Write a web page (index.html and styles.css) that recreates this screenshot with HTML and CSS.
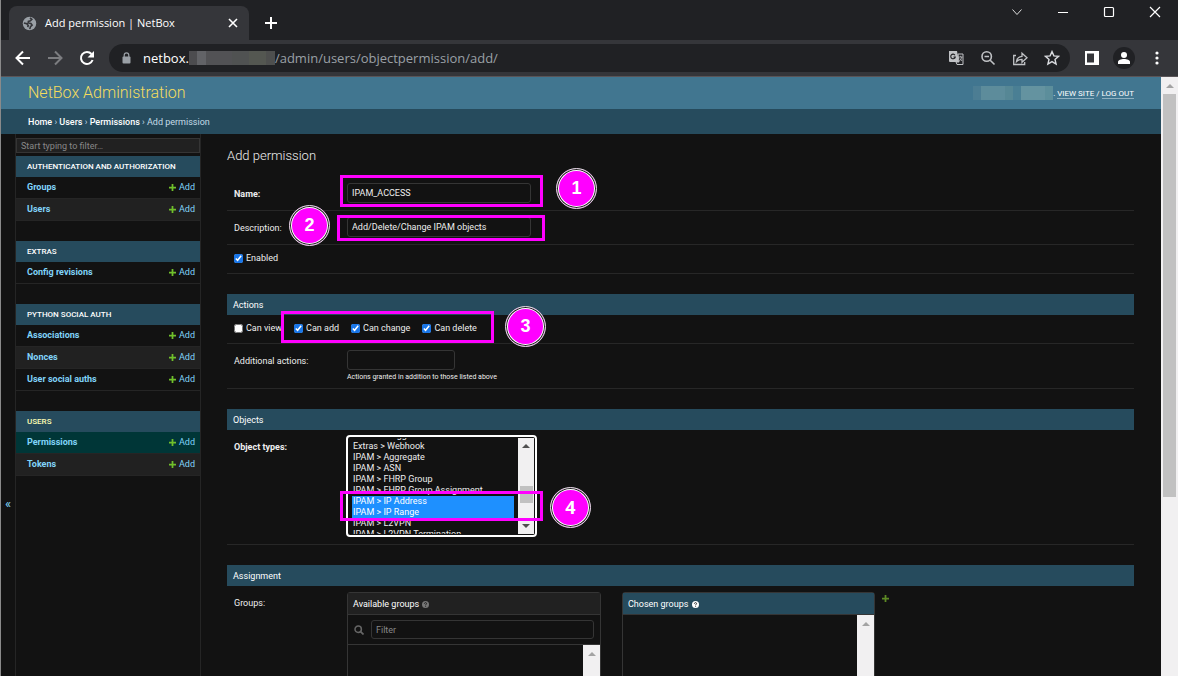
FILE: index.html
```html
<!DOCTYPE html>
<html lang="en">
<head>
<meta charset="utf-8">
<title>Add permission | NetBox</title>
<link rel="stylesheet" href="styles.css">
</head>
<body>
<svg class="defs" aria-hidden="true">
  <symbol id="plus" viewBox="0 0 8 8"><path d="M3 0h2v3h3v2H5v3H3V5H0V3h3z" fill="currentColor"/></symbol>
  <symbol id="help" viewBox="0 0 8 8"><circle cx="4" cy="4" r="4" fill="currentColor"/><path d="M2.7 3.1C2.8 1.4 5.3 1.5 5.2 3 5.1 3.8 4.1 3.7 4.1 4.8M4.1 5.5v1" fill="none" stroke="#151515" stroke-width="1"/></symbol>
</svg>

<div class="titlebar">
  <div class="tab">
    <svg class="globe" viewBox="0 0 16 16"><circle cx="8" cy="8" r="7.2" fill="#9aa0a6"/><path d="M8.500 2 10.500 3.600 9 5.200 6.800 5.800 6.600 7.400 9.500 8l1.300 1.800L9 11.500 8.300 14M2 7.500l3.200.8 1.500 2-.7 1.500" fill="none" stroke="#35363a" stroke-width="1.700"/></svg>
    <span class="tab-title">Add permission | NetBox</span>
    <button class="icon-btn tab-close" aria-label="Close tab"><svg viewBox="0 0 10 10"><path d="M1 1l8 8M9 1L1 9" stroke="#fff" stroke-width="1.6"/></svg></button>
  </div>
  <button class="icon-btn new-tab" aria-label="New tab"><svg viewBox="0 0 12 12"><path d="M6 0v12M0 6h12" stroke="#fff" stroke-width="2"/></svg></button>
  <div class="window-controls">
    <button class="icon-btn" aria-label="Search tabs"><svg viewBox="0 0 12 12"><path d="M1.500 3.500 6 8.500l4.500-5" fill="none" stroke="#ddd"/></svg></button>
    <button class="icon-btn" aria-label="Minimize"><svg viewBox="0 0 12 12"><path d="M1 6.500h10" stroke="#fff"/></svg></button>
    <button class="icon-btn" aria-label="Maximize"><svg viewBox="0 0 12 12"><rect x="1.500" y="1.500" width="9" height="9" rx="1" fill="none" stroke="#fff" stroke-width="1.200"/></svg></button>
    <button class="icon-btn" aria-label="Close"><svg viewBox="0 0 12 12"><path d="M1 1l10 10M11 1L1 11" stroke="#fff" stroke-width="1.200"/></svg></button>
  </div>
</div>

<div class="toolbar">
  <div class="nav">
    <button class="icon-btn" aria-label="Back"><svg viewBox="0 0 16 16"><path d="M15 8H2M8 1.500 1.500 8 8 14.500" fill="none" stroke="#fff" stroke-width="2"/></svg></button>
    <button class="icon-btn" aria-label="Forward"><svg viewBox="0 0 16 16"><path d="M1 8h13M8 1.500 14.500 8 8 14.500" fill="none" stroke="#7c7d80" stroke-width="2"/></svg></button>
    <button class="icon-btn" aria-label="Reload"><svg viewBox="0 0 16 16"><path d="M13.600 10A6 6 0 1 1 12.500 4" fill="none" stroke="#fff" stroke-width="2"/><path d="M15 1v6.500H8.500z" fill="#fff"/></svg></button>
  </div>
  <div class="omnibox">
    <svg class="lock" viewBox="0 0 9 12"><path d="M2.200 5V3.200a2.300 2.300 0 0 1 4.600 0V5" fill="none" stroke="#9aa0a6" stroke-width="1.200"/><rect x=".5" y="4.500" width="8" height="7" rx="1" fill="#9aa0a6"/></svg>
    <span class="url"><span class="host">netbox.</span><span class="mosaic mosaic-url"></span><span>/admin/users/objectpermission/add/</span></span>
    <div class="omni-actions">
      <button class="icon-btn" aria-label="Translate"><svg viewBox="0 0 16 16"><path d="M1 1h8l2 11H2a1 1 0 0 1-1-1z" fill="#c0c2c5"/><path d="M10 4h5v10.500H9L8 12h3z" fill="none" stroke="#c0c2c5"/><path d="M7 5.200A2.300 2.300 0 1 0 7.300 7H5.500" fill="none" stroke="#202124" stroke-width="1.100"/><path d="M11 7h3.500M12.700 5.800V7M13.800 7c-.4 2-1.500 3-2.500 4M12 8.500l2 2.500" fill="none" stroke="#c0c2c5" stroke-width=".8"/></svg></button>
      <button class="icon-btn" aria-label="Zoom"><svg viewBox="0 0 16 16"><circle cx="6.700" cy="6.500" r="4.700" fill="none" stroke="#c0c2c5" stroke-width="1.600"/><path d="M10.200 10.200 14.500 14.500M4.500 6.500h4.500" stroke="#c0c2c5" stroke-width="1.600"/></svg></button>
      <button class="icon-btn" aria-label="Share"><svg viewBox="0 0 16 16"><path d="M4 5.500H1.700v9h11V12M4.500 11.500C5 8 7 6.500 10 6.300V3.200l5 4.600-5 4.400V9.300c-2.500 0-4 .6-5.500 2.200z" fill="none" stroke="#c0c2c5" stroke-width="1.300"/></svg></button>
      <button class="icon-btn" aria-label="Bookmark"><svg viewBox="0 0 16 16"><path d="M8 1.600l1.900 4.300 4.600.4-3.500 3.100 1.100 4.600L8 11.600 3.900 14 5 9.400 1.500 6.300l4.600-.4z" fill="none" stroke="#dadce0" stroke-width="1.400"/></svg></button>
    </div>
  </div>
  <button class="icon-btn side-panel" aria-label="Side panel"><svg viewBox="0 0 14 14"><path d="M0 0h14v14H0zM2 2.500v9h7v-9z" fill="#fff" fill-rule="evenodd"/></svg></button>
  <button class="icon-btn profile" aria-label="Profile"><svg viewBox="0 0 12 12"><circle cx="6" cy="3" r="3" fill="#fff"/><path d="M0 12V10c0-2 3-3 6-3s6 1 6 3v2z" fill="#fff"/></svg></button>
  <button class="icon-btn more" aria-label="Menu"><svg viewBox="0 0 4 14"><circle cx="2" cy="2" r="1.600" fill="#fff"/><circle cx="2" cy="7" r="1.600" fill="#fff"/><circle cx="2" cy="12" r="1.600" fill="#fff"/></svg></button>
</div>

<div class="viewport">
  <div class="page">
    <header class="site-header">
      <a class="brand" href="#">NetBox Administration</a>
      <div class="user-tools"><span class="mosaic mosaic-user"></span><span>. <a href="#">View site</a> / <a href="#">Log out</a></span></div>
    </header>
    <nav class="breadcrumbs" aria-label="Breadcrumbs"><a href="#">Home</a> › <a href="#">Users</a> › <a href="#">Permissions</a> › Add permission</nav>

    <div class="body">
      <button class="toggle-nav" aria-label="Toggle navigation">«</button>
      <nav class="sidebar" aria-label="Sidebar">
        <input class="nav-filter" type="search" placeholder="Start typing to filter…" aria-label="Filter navigation items">
        <table class="module">
          <caption>Authentication and Authorization</caption>
          <tr><th scope="row"><a href="#">Groups</a></th><td><a href="#"><svg class="plus"><use href="#plus"/></svg>Add</a></td></tr>
          <tr><th scope="row"><a href="#">Users</a></th><td><a href="#"><svg class="plus"><use href="#plus"/></svg>Add</a></td></tr>
        </table>
        <table class="module">
          <caption>Extras</caption>
          <tr><th scope="row"><a href="#">Config revisions</a></th><td><a href="#"><svg class="plus"><use href="#plus"/></svg>Add</a></td></tr>
        </table>
        <table class="module">
          <caption>Python Social Auth</caption>
          <tr><th scope="row"><a href="#">Associations</a></th><td><a href="#"><svg class="plus"><use href="#plus"/></svg>Add</a></td></tr>
          <tr><th scope="row"><a href="#">Nonces</a></th><td><a href="#"><svg class="plus"><use href="#plus"/></svg>Add</a></td></tr>
          <tr><th scope="row"><a href="#">User social auths</a></th><td><a href="#"><svg class="plus"><use href="#plus"/></svg>Add</a></td></tr>
        </table>
        <table class="module current">
          <caption>Users</caption>
          <tr class="selected"><th scope="row"><a href="#">Permissions</a></th><td><a href="#"><svg class="plus"><use href="#plus"/></svg>Add</a></td></tr>
          <tr><th scope="row"><a href="#">Tokens</a></th><td><a href="#"><svg class="plus"><use href="#plus"/></svg>Add</a></td></tr>
        </table>
      </nav>

      <main class="content">
        <h1>Add permission</h1>
        <form>
          <section class="fieldset">
            <div class="row"><label class="label required" for="name">Name:</label><input class="text" id="name" type="text" value="IPAM_ACCESS"></div>
            <div class="row"><label class="label" for="description">Description:</label><input class="text" id="description" type="text" value="Add/Delete/Change IPAM objects"></div>
            <div class="row checks"><label><input type="checkbox" checked>Enabled</label></div>
          </section>
          <section class="fieldset">
            <h2>Actions</h2>
            <div class="row checks">
              <label><input type="checkbox">Can view</label>
              <label><input type="checkbox" checked>Can add</label>
              <label><input type="checkbox" checked>Can change</label>
              <label><input type="checkbox" checked>Can delete</label>
            </div>
            <div class="row with-help">
              <label class="label" for="actions">Additional actions:</label>
              <div><input class="text short" id="actions" type="text"><p class="help">Actions granted in addition to those listed above</p></div>
            </div>
          </section>
          <section class="fieldset">
            <h2>Objects</h2>
            <div class="row objects">
              <label class="label required" for="types">Object types:</label>
              <div class="listbox">
                <select id="types" multiple>
                  <option>Extras &gt; Tagged item</option>
                  <option>Extras &gt; Webhook</option>
                  <option>IPAM &gt; Aggregate</option>
                  <option>IPAM &gt; ASN</option>
                  <option>IPAM &gt; FHRP Group</option>
                  <option>IPAM &gt; FHRP Group Assignment</option>
                  <option selected>IPAM &gt; IP Address</option>
                  <option selected>IPAM &gt; IP Range</option>
                  <option>IPAM &gt; L2VPN</option>
                  <option>IPAM &gt; L2VPN Termination</option>
                </select>
                <div class="scroll dark"><span class="arrow up"></span><span class="thumb"></span><span class="arrow down"></span></div>
              </div>
            </div>
          </section>
          <section class="fieldset">
            <h2>Assignment</h2>
            <div class="row groups">
              <span class="label">Groups:</span>
              <div class="selector">
                <div class="picker">
                  <h3>Available groups <svg class="help-icon"><use href="#help"/></svg></h3>
                  <div class="picker-filter">
                    <svg class="search" viewBox="0 0 10 10"><circle cx="4.200" cy="4.200" r="3.200" fill="none" stroke="#666" stroke-width="1.500"/><path d="M6.600 6.600 9.500 9.500" stroke="#666" stroke-width="1.700"/></svg>
                    <input type="text" placeholder="Filter" aria-label="Filter groups">
                  </div>
                  <div class="picker-list"><div class="scroll"><span class="arrow up"></span></div></div>
                </div>
                <div class="picker chosen">
                  <h3>Chosen groups <svg class="help-icon"><use href="#help"/></svg></h3>
                  <div class="picker-list"><div class="scroll"><span class="arrow up"></span></div></div>
                </div>
                <a href="#" aria-label="Add group"><svg class="plus dim"><use href="#plus"/></svg></a>
              </div>
            </div>
          </section>
        </form>
      </main>

      <div class="callout box-name"></div>
      <div class="callout box-description"></div>
      <div class="callout box-actions"></div>
      <div class="callout box-types"></div>
      <div class="badge badge-1">1</div>
      <div class="badge badge-2">2</div>
      <div class="badge badge-3">3</div>
      <div class="badge badge-4">4</div>
    </div>
  </div>
  <div class="scroll page-scroll"><span class="arrow up"></span><span class="thumb"></span></div>
</div>
<script src="main.js"></script>
</body>
</html>
```
FILE: styles.css
```css
* { box-sizing: border-box; }
body {
  margin: 0;
  height: 100vh;
  overflow: hidden;
  display: flex;
  flex-direction: column;
  border-left: 1px solid #8a8a8a;
  background: #121212;
  color: #eee;
  font: 9px/12px Roboto, "Liberation Sans", sans-serif;
}
a { color: #81d4fa; text-decoration: none; }
h1, h2, h3, p { margin: 0; font-weight: 400; }
.defs { position: absolute; width: 0; height: 0; }
button, input, select { font: inherit; color: inherit; }

/* Browser chrome */
.icon-btn { border: 0; padding: 0; background: none; display: flex; align-items: center; justify-content: center; flex: none; }
.titlebar, .toolbar { font-family: "Open Sans", "Noto Sans", sans-serif; flex: none; display: flex; }
.titlebar { height: 40px; background: #202124; padding-left: 8px; }
.tab { display: flex; align-items: center; width: 240px; height: 34px; margin-top: 6px; padding: 0 11px 0 13px; background: #35363a; border-radius: 8px 8px 0 0; }
.globe { width: 15px; height: 15px; }
.tab-title { flex: 1; margin-left: 8px; font-size: 11px; line-height: 16px; color: #fff; white-space: nowrap; }
.tab-close svg { width: 10px; height: 10px; }
.new-tab { width: 44px; padding-top: 6px; }
.new-tab svg { width: 12px; height: 12px; }
.window-controls { display: flex; margin-left: auto; height: 24px; }
.window-controls .icon-btn { width: 46px; }
.window-controls svg { width: 12px; height: 12px; }
.toolbar { height: 37px; align-items: center; background: #35363a; border-bottom: 1px solid #5a5558; padding-right: 19px; }
.nav { display: flex; gap: 16px; padding: 0 14px; }
.nav svg { width: 16px; height: 16px; }
.omnibox { flex: 1; display: flex; align-items: center; height: 28px; border-radius: 14px; background: #202124; padding: 0 10px 0 13px; }
.lock { width: 9px; height: 12px; }
.url { flex: 1; display: flex; align-items: center; margin-left: 12px; font-size: 13px; line-height: 20px; color: #9aa0a6; white-space: nowrap; }
.host { color: #fff; }
.mosaic { flex: none; height: 14px; }
.mosaic-url { width: 86px; background: linear-gradient(90deg, #4c4c4f 0 8px, #626367 8px 17px, #525255 17px 43px, #505252 43px 60px, #545751 60px 77px, #4e4f4e 77px); }
.omni-actions { display: flex; gap: 16px; }
.omni-actions svg { width: 16px; height: 16px; }
.side-panel { margin-left: 15px; }
.side-panel svg { width: 14px; height: 14px; }
.profile { width: 22px; height: 22px; margin-left: 14px; border-radius: 50%; background: #202124; }
.profile svg { width: 12px; height: 12px; }
.more { margin-left: 20px; }
.more svg { width: 4px; height: 14px; }

/* Page frame */
.viewport { flex: 1; min-height: 0; display: flex; }
.page { flex: 1; min-width: 0; display: flex; flex-direction: column; }
.site-header { flex: none; display: flex; align-items: center; justify-content: space-between; height: 32px; padding: 0 27px; background: #417690; }
.brand { font-size: 16px; line-height: 20px; font-weight: 300; color: #f5dd5d; }
.user-tools { display: flex; align-items: center; font-size: 8px; line-height: 9px; text-transform: uppercase; color: #fff; }
.user-tools a { color: #fff; border-bottom: 1px solid #8fb0c0; }
.mosaic-user { width: 80px; background: linear-gradient(90deg, #4c7d93 0 8px, #5d8c9b 8px 32px, #568795 32px 40px, #4a7f94 40px 48px, #6493a0 48px 72px, #5c8e9b 72px); }
.breadcrumbs { flex: none; height: 25px; padding: 7px 27px 0; background: #264b5d; color: #c4dce8; }
.breadcrumbs a { color: #fff; font-weight: 500; }
.body { flex: 1; min-height: 0; position: relative; display: flex; overflow: hidden; }

/* Sidebar */
.toggle-nav { width: 14px; flex: none; padding: 198px 0 0; border: 0; background: none; color: #81d4fa; font-size: 13px; }
.sidebar { flex: none; width: 186px; padding-top: 4px; border: solid #252525; border-width: 0 1px; }
.nav-filter { appearance: none; display: block; width: 100%; height: 15px; margin: 0 0 3px; padding: 0 4px; border: 1px solid #353535; background: #212121; outline: 0; }
::placeholder { color: #888; opacity: 1; }
.module { width: 100%; margin-bottom: 20px; border-spacing: 0; border-collapse: separate; }
.module caption { height: 21px; padding: 5px 11px 0; background: #264b5d; color: #fff; font-size: 8px; line-height: 12px; font-weight: 500; text-align: left; text-transform: uppercase; }
.module.current caption { color: #ffffb3; }
.module tr:nth-child(even) { background: #212121; }
.module .selected { background: #003637; }
.module th, .module td { height: 22px; padding: 0 0 1px 11px; border-bottom: 1px solid #252525; text-align: left; }
.module td { padding: 0 5px 1px 0; text-align: right; }
.module th { font-weight: 700; }
.plus { width: 7px; height: 7px; margin-right: 3px; color: #70bf2b; vertical-align: -1px; }
.plus.dim { color: #5d8a24; }

/* Form */
.content { flex: 1; min-width: 0; padding: 13px 27px 0 26px; }
.content h1 { margin-bottom: 12px; font-size: 13px; line-height: 18px; font-weight: 300; }
.fieldset { margin-bottom: 20px; }
.fieldset h2 { height: 21px; padding: 5px 6px 0; background: #264b5d; color: #fff; font-size: 9px; line-height: 12px; }
.row { display: flex; align-items: flex-start; min-height: 34px; padding: 6px 7px 7px; border-bottom: 1px solid #272727; }
.row.with-help { padding-bottom: 5px; }
.label { flex: none; width: 113px; padding-top: 5px; }
.required { font-weight: 700; }
.text { display: block; width: 184px; height: 20px; padding: 0 4px 1px; border: 1px solid #353535; border-radius: 3px; background: #121212; }
.short { width: 108px; }
.help { margin-top: 2px; font-size: 7px; line-height: 11px; }
.row.checks { min-height: 29px; gap: 12px; padding: 7px; }
.checks label { display: flex; align-items: center; gap: 3px; white-space: nowrap; }
.checks input { width: 9px; height: 9px; margin: 0; accent-color: #1976e8; }
.listbox { display: flex; width: 191px; height: 102px; margin-top: -1px; margin-left: -1px; padding: 1px; border: 2px solid #fff; border-radius: 4px; }
.row.objects { min-height: 115px; }
.listbox select { flex: 1; min-width: 0; height: 96px; margin: 0; padding: 0 4px 0 3px; border: 0; outline: 0; background: #121212; scrollbar-width: none; }
.listbox select::-webkit-scrollbar { display: none; }
.listbox option { height: 11px; min-height: 11px; padding: 0 1px; line-height: 11px; }
.listbox option:checked { background: linear-gradient(#1e90ff, #1e90ff); color: #fff; }
.row.groups { border-bottom: 0; }
.selector { display: flex; align-items: flex-start; }
.picker { width: 254px; margin-right: 21px; border: 1px solid #353535; border-radius: 3px; }
.picker h3 { height: 22px; padding: 5px; font-size: 9px; line-height: 12px; background: #212121; color: #fff; border-bottom: 1px solid #353535; }
.picker.chosen { width: 253px; margin-right: 7px; }
.chosen h3 { background: #264b5d; }
.help-icon { width: 7px; height: 7px; margin-left: 1px; color: #777; vertical-align: -1px; }
.chosen .help-icon { color: #fff; }
.picker-filter { display: flex; align-items: center; gap: 7px; height: 30px; padding: 0 6px; border-bottom: 1px solid #353535; }
.search { width: 10px; height: 10px; }
.picker-filter input { flex: 1; min-width: 0; height: 19px; padding: 0 4px; border: 1px solid #353535; border-radius: 3px; background: #121212; }
.picker-list { display: flex; justify-content: flex-end; height: 150px; }

/* Scroll bars */
.scroll { flex: none; display: flex; flex-direction: column; align-items: center; width: 17px; padding-top: 7px; background: #f1f0f1; }
.arrow { border: 4px solid transparent; border-top-width: 0; border-bottom-color: #a3a3a3; }
.page-scroll .thumb { width: 13px; height: 68%; margin-top: 6px; background: #c1c1c1; }
.scroll.dark { width: 16px; padding: 6px 0; }
.dark .arrow { border-bottom-color: #505050; }
.dark .arrow.down { border-width: 4px 4px 0; border-color: #505050 transparent transparent; margin-top: auto; }
.dark .thumb { width: 13px; height: 17px; margin-top: 38px; background: #c1c1c1; }

/* Step annotations laid over the form */
.callout { position: absolute; border: 3px solid #f0f; }
.box-name { left: 339px; top: 41px; width: 203px; height: 32px; }
.box-description { left: 336px; top: 81px; width: 208px; height: 26px; }
.box-actions { left: 280px; top: 177px; width: 213px; height: 32px; }
.box-types { left: 339px; top: 357px; width: 203px; height: 30px; }
.badge { position: absolute; width: 41px; height: 41px; padding-bottom: 2px; display: flex; align-items: center; justify-content: center; border: 1px solid #ddd; border-radius: 50%; background: #f0f; box-shadow: inset 0 0 0 1px #222, inset 0 0 0 2px #fff; color: #fff; font: 700 18px/20px "Liberation Sans", Arial, sans-serif; }
.badge-1 { left: 555px; top: 34px; }
.badge-2 { left: 288px; top: 71px; }
.badge-3 { left: 504px; top: 172px; }
.badge-4 { left: 549px; top: 353px; font-family: "Open Sans", sans-serif; }
```
FILE: main.js
```js
document.getElementById("types").scrollTop = 8;
```
